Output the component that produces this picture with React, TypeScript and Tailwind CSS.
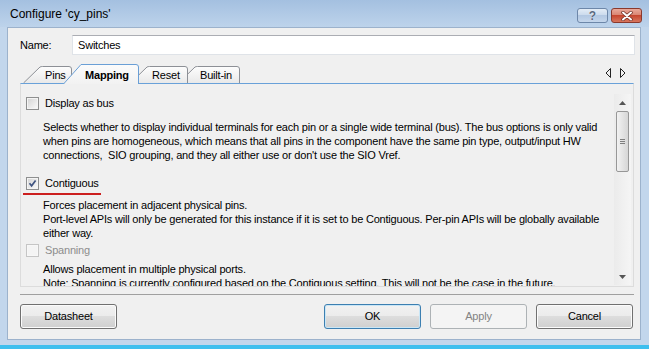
import React from 'react';

type CheckState = 'off' | 'on' | 'disabled';

const CheckBox = ({ state }: { state: CheckState }) => (
  <div
    className={`w-[13px] h-[13px] shrink-0 border p-px ${
      state === 'disabled' ? 'border-[#c5c5c5] bg-[#f7f7f7]' : 'border-[#8e8f8f] bg-[#f4f4f4]'
    }`}
  >
    <div
      className={`w-full h-full ${
        state === 'disabled'
          ? 'bg-[#f4f4f4]'
          : 'bg-[linear-gradient(135deg,#d6d6d6,#f8f8f8)]'
      }`}
    >
      {state === 'on' && (
        <svg width="9" height="9" viewBox="0 0 9 9">
          <path d="M1.5 4.3 L3.6 6.8 L7.6 1.6" fill="none" stroke="#3f5481" strokeWidth="1.7" />
        </svg>
      )}
    </div>
  </div>
);

const Tab = ({
  label,
  width,
  selected,
  className,
}: {
  label: string;
  width: number;
  selected?: boolean;
  className: string;
}) => {
  const h = selected ? 20 : 17;
  const w = width;
  const outline = selected
    ? `M0.5 ${h} L18 0.5 L${w - 3} 0.5 Q${w - 0.5} 0.5 ${w - 0.5} 3 L${w - 0.5} ${h}`
    : `M0.5 ${h} L17 1 Q18 0.5 19.5 0.5 L${w - 3} 0.5 Q${w - 0.5} 0.5 ${w - 0.5} 3 L${w - 0.5} ${h}`;
  return (
    <div
      className={`relative shrink-0 flex items-center pl-[22px] ${className}`}
      style={{ width: w, height: h }}
    >
      <svg className="absolute inset-0" width={w} height={h} viewBox={`0 0 ${w} ${h}`}>
        <defs>
          <linearGradient id={`g-${label}`} x1="0" y1="0" x2="0" y2="1">
            <stop offset="0" stopColor={selected ? '#fbfbfb' : '#fdfdfd'} />
            <stop offset="1" stopColor={selected ? '#f2f2f2' : '#e9e9e9'} />
          </linearGradient>
        </defs>
        <path d={`${outline} Z`} fill={`url(#g-${label})`} />
        <path d={outline} fill="none" stroke={selected ? '#6a9fd6' : '#8d9096'} />
      </svg>
      <span className={`relative leading-[14px] ${selected ? 'font-bold mt-[1px]' : 'mt-[1px]'}`}>{label}</span>
    </div>
  );
};

const Button = ({ label, kind }: { label: string; kind?: 'default' | 'disabled' }) => {
  const look =
    kind === 'disabled'
      ? 'border-[#adb2b5] bg-[#f4f4f4] text-[#838383]'
      : kind === 'default'
      ? 'border-[#3c7fb1] bg-[linear-gradient(#f2f2f2_0%,#ebebeb_50%,#dddddd_50%,#cfcfcf_100%)] shadow-[inset_0_0_0_1px_#c9e6f6]'
      : 'border-[#707070] bg-[linear-gradient(#f2f2f2_0%,#ebebeb_50%,#dddddd_50%,#cfcfcf_100%)] shadow-[inset_0_0_0_1px_#fbfbfb]';
  return (
    <div className={`w-[97px] h-[25px] rounded-[3px] border flex items-center justify-center ${look}`}>
      {label}
    </div>
  );
};

const Line = ({ children }: { children: React.ReactNode }) => (
  <div className="h-[14px] leading-[14px] whitespace-pre">{children}</div>
);

export default function App() {
  return (
    <div className="w-[649px] h-[349px] flex flex-col bg-[#c2d6ec] font-['Liberation_Sans',Arial,sans-serif] text-[11px] tracking-[-0.2px] text-black overflow-hidden">
      {/* Title bar */}
      <div className="h-[27px] shrink-0 flex items-start justify-between pl-[10px] pr-[7px] bg-[linear-gradient(#a4c0e0,#bdd3eb)]">
        <div className="mt-[6px] text-[12px] leading-[16px] tracking-normal">Configure 'cy_pins'</div>
        <div className="flex gap-[3px] mt-[8px]">
          <div className="w-[31px] h-[15px] rounded-[3px] border border-[#6d87a9] bg-[linear-gradient(#e3ecf6_0%,#c9d9ec_50%,#b3c8e2_50%,#c4d6ec_100%)] flex items-center justify-center">
            <span className="text-[12px] leading-[12px] font-bold text-[#5a6a80] tracking-normal [text-shadow:0_0_1px_#fff]">?</span>
          </div>
          <div className="w-[31px] h-[15px] rounded-[3px] border border-[#8a392d] bg-[linear-gradient(#e9a99b_0%,#d8826f_50%,#c6462f_50%,#d7765e_100%)] flex items-center justify-center">
            <svg width="12" height="10" viewBox="0 0 12 10">
              <path d="M2 1.5 L10 8.5 M10 1.5 L2 8.5" stroke="#6b2a20" strokeWidth="3.4" strokeLinecap="round" />
              <path d="M2 1.5 L10 8.5 M10 1.5 L2 8.5" stroke="#ffffff" strokeWidth="2" strokeLinecap="round" />
            </svg>
          </div>
        </div>
      </div>

      {/* Client area */}
      <div className="ml-[7px] mr-[8px] h-[313px] shrink-0 border border-[#9cb2cc] bg-[#f0f0f0] flex flex-col">
        {/* Name row */}
        <div className="mt-[7px] h-[20px] flex items-center">
          <div className="w-[64px] pl-[12px]">Name:</div>
          <div className="w-[563px] h-[20px] bg-white border border-[#dfe3e8] border-t-[#abadb3] flex items-center pl-[5px]">
            Switches
          </div>
        </div>

        {/* Tabs */}
        <div className="ml-[12px] w-[614px] mt-[9px] h-[20px] -mb-px relative z-10 flex items-end pl-[3px]">
          <Tab label="Pins" width={49} className="z-[4] mb-px" />
          <Tab label="Mapping" width={76} selected className="z-[10] ml-[-9px]" />
          <Tab label="Reset" width={58} className="z-[3] mb-px ml-[-9px]" />
          <Tab label="Built-in" width={62} className="z-[2] mb-px ml-[-10px]" />
          <div className="ml-auto mr-[8px] mb-[6px] flex gap-[7px]">
            <svg width="7" height="10" viewBox="0 0 7 10">
              <path d="M5.5 0.5 L5.5 9.5 L1 5 Z" fill="none" stroke="#222" />
            </svg>
            <svg width="7" height="10" viewBox="0 0 7 10">
              <path d="M1.5 0.5 L1.5 9.5 L6 5 Z" fill="none" stroke="#222" />
            </svg>
          </div>
        </div>

        {/* Panel */}
        <div className="ml-[12px] w-[614px] h-[204px] shrink-0 border-t border-t-[#69a1d9] border-x border-b border-x-[#dcdcdc] border-b-[#dcdcdc] flex">
          <div className="flex-1 overflow-hidden pl-[5px] pt-[12px]">
            <div className="h-[15px] flex items-center gap-[6px]">
              <CheckBox state="off" />
              <span>Display as bus</span>
            </div>
            <div className="pl-[17px] mt-[9px]">
              <Line>Selects whether to display individual terminals for each pin or a single wide terminal (bus). The bus options is only valid</Line>
              <Line>when pins are homogeneous, which means that all pins in the component have the same pin type, output/input HW</Line>
              <Line>connections,  SIO grouping, and they all either use or don't use the SIO Vref.</Line>
            </div>

            <div className="h-[15px] mt-[14px] flex items-center gap-[6px]">
              <CheckBox state="on" />
              <span>Contiguous</span>
            </div>
            <div className="ml-[-3px] mt-[2px] w-[78px] h-[2px] bg-[#cc1f1f]" />
            <div className="pl-[17px] mt-[3px]">
              <Line>Forces placement in adjacent physical pins.</Line>
              <Line>Port-level APIs will only be generated for this instance if it is set to be Contiguous. Per-pin APIs will be globally available</Line>
              <Line>either way.</Line>
            </div>

            <div className="h-[15px] mt-[3px] flex items-center gap-[6px]">
              <CheckBox state="disabled" />
              <span className="text-[#8d8d8d]">Spanning</span>
            </div>
            <div className="pl-[17px] mt-[4px]">
              <Line>Allows placement in multiple physical ports.</Line>
              <Line>Note: Spanning is currently configured based on the Contiguous setting. This will not be the case in the future.</Line>
            </div>
          </div>

          {/* Scrollbar */}
          <div className="w-[17px] mt-[10px] mb-px mr-[2px] flex flex-col items-center bg-[linear-gradient(90deg,#ebebeb,#f5f5f5)]">
            <div className="h-[17px] w-full flex items-center justify-center">
              <svg width="7" height="4" viewBox="0 0 7 4">
                <path d="M0 4 L3.5 0 L7 4 Z" fill="#555" />
              </svg>
            </div>
            <div className="w-[13px] h-[61px] rounded-[2px] border border-[#979797] bg-[linear-gradient(90deg,#f2f2f2,#e4e4e4_50%,#d6d6d6)] flex flex-col items-center justify-center gap-[1px]">
              <div className="w-[5px] h-px bg-[#7f7f7f]" />
              <div className="w-[5px] h-px bg-[#7f7f7f]" />
              <div className="w-[5px] h-px bg-[#7f7f7f]" />
            </div>
            <div className="flex-1" />
            <div className="h-[17px] w-full flex items-center justify-center">
              <svg width="7" height="4" viewBox="0 0 7 4">
                <path d="M0 0 L3.5 4 L7 0 Z" fill="#555" />
              </svg>
            </div>
          </div>
        </div>

        {/* Separator */}
        <div className="ml-[12px] w-[614px] mt-[7px] h-px bg-[#a0a0a0]" />

        {/* Buttons */}
        <div className="mt-[9px] flex pl-[12px] pr-[7px]">
          <Button label="Datasheet" />
          <div className="ml-auto flex gap-[9px]">
            <Button label="OK" kind="default" />
            <Button label="Apply" kind="disabled" />
            <Button label="Cancel" />
          </div>
        </div>
      </div>

      {/* Bottom frame */}
      <div className="h-[5px] shrink-0" />
      <div className="flex-1 bg-[#3ebfee]" />
    </div>
  );
}
